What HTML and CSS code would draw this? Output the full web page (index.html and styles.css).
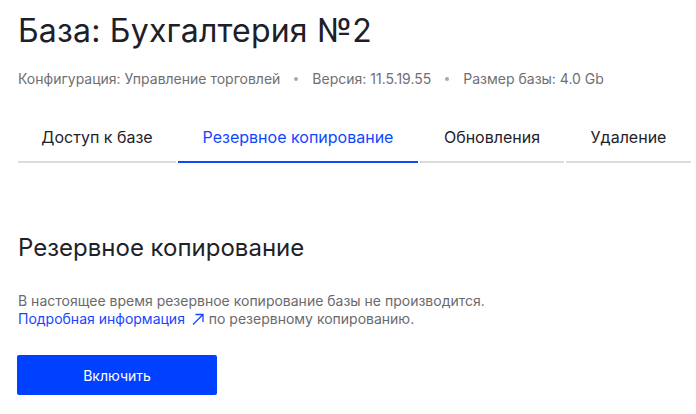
FILE: index.html
```html
<!DOCTYPE html>
<html lang="ru">
<head>
<meta charset="utf-8">
<link rel="stylesheet" href="styles.css">
</head>
<body>
<div class="page">
  <h1 class="title">База: Бухгалтерия №2</h1>
  <div class="meta">
    <span>Конфигурация: Управление торговлей</span>
    <span class="dot"></span>
    <span>Версия: 11.5.19.55</span>
    <span class="dot"></span>
    <span>Размер базы: 4.0 Gb</span>
  </div>
  <nav class="tabs">
    <div class="tab">Доступ к базе</div>
    <div class="tab active">Резервное копирование</div>
    <div class="tab">Обновления</div>
    <div class="tab">Удаление</div>
  </nav>
  <h2 class="section-title">Резервное копирование</h2>
  <p class="text">В настоящее время резервное копирование базы не производится.<br><a class="link" href="#">Подробная информация <svg class="arrow" width="14" height="12" viewBox="0 0 14 12"><path d="M2 11.5L12 1.5M4.5 1.5H12V9" fill="none" stroke="currentColor" stroke-width="1.3"/></svg></a> по резервному копированию.</p>
  <button class="btn">Включить</button>
</div>
</body>
</html>
```
FILE: styles.css
```css
* { box-sizing: border-box; }
html, body { margin: 0; padding: 0; background: #fff; }
body { font-family: Inter, "Noto Sans", sans-serif; color: #1f2229; }
.page { padding: 11px 4px 0 18px; }
.title { margin: 0; font-size: 32px; line-height: 40px; font-weight: 400; color: #1d2029; letter-spacing: 0.2px; }
.meta { display: flex; align-items: center; gap: 14px; margin-top: 19px; font-size: 14px; line-height: 18px; color: #6f6f72; }
.dot { width: 4px; height: 4px; border-radius: 50%; background: #a9a9ad; }
.tabs { display: flex; gap: 2px; margin-top: 39px; }
.tab { padding: 0 0 14px; font-size: 16px; line-height: 20px; color: #1f2229; border-bottom: 2px solid #dcdcdc; text-align: center; white-space: nowrap; }
.tab:nth-child(1) { width: 158px; }
.tab:nth-child(2) { width: 240px; }
.tab:nth-child(3) { width: 144px; }
.tab:nth-child(4) { width: 125px; }
.tab.active { color: #0f46ff; border-bottom-color: #0f46ff; }
.section-title { margin: 70px 0 0; font-size: 24px; line-height: 30px; font-weight: 400; color: #1f2229; }
.text { margin: 29px 0 0; font-size: 14px; line-height: 18px; color: #6a6a6d; }
.link { color: #1745ff; text-decoration: none; }
.arrow { vertical-align: -1px; margin-left: 2px; }
.btn { display: block; margin: 27px 0 0 -1px; width: 200px; height: 40px; border: 0; border-radius: 2px; background: #0041ff; color: #fff; font-family: Inter, sans-serif; font-size: 14px; }
```
